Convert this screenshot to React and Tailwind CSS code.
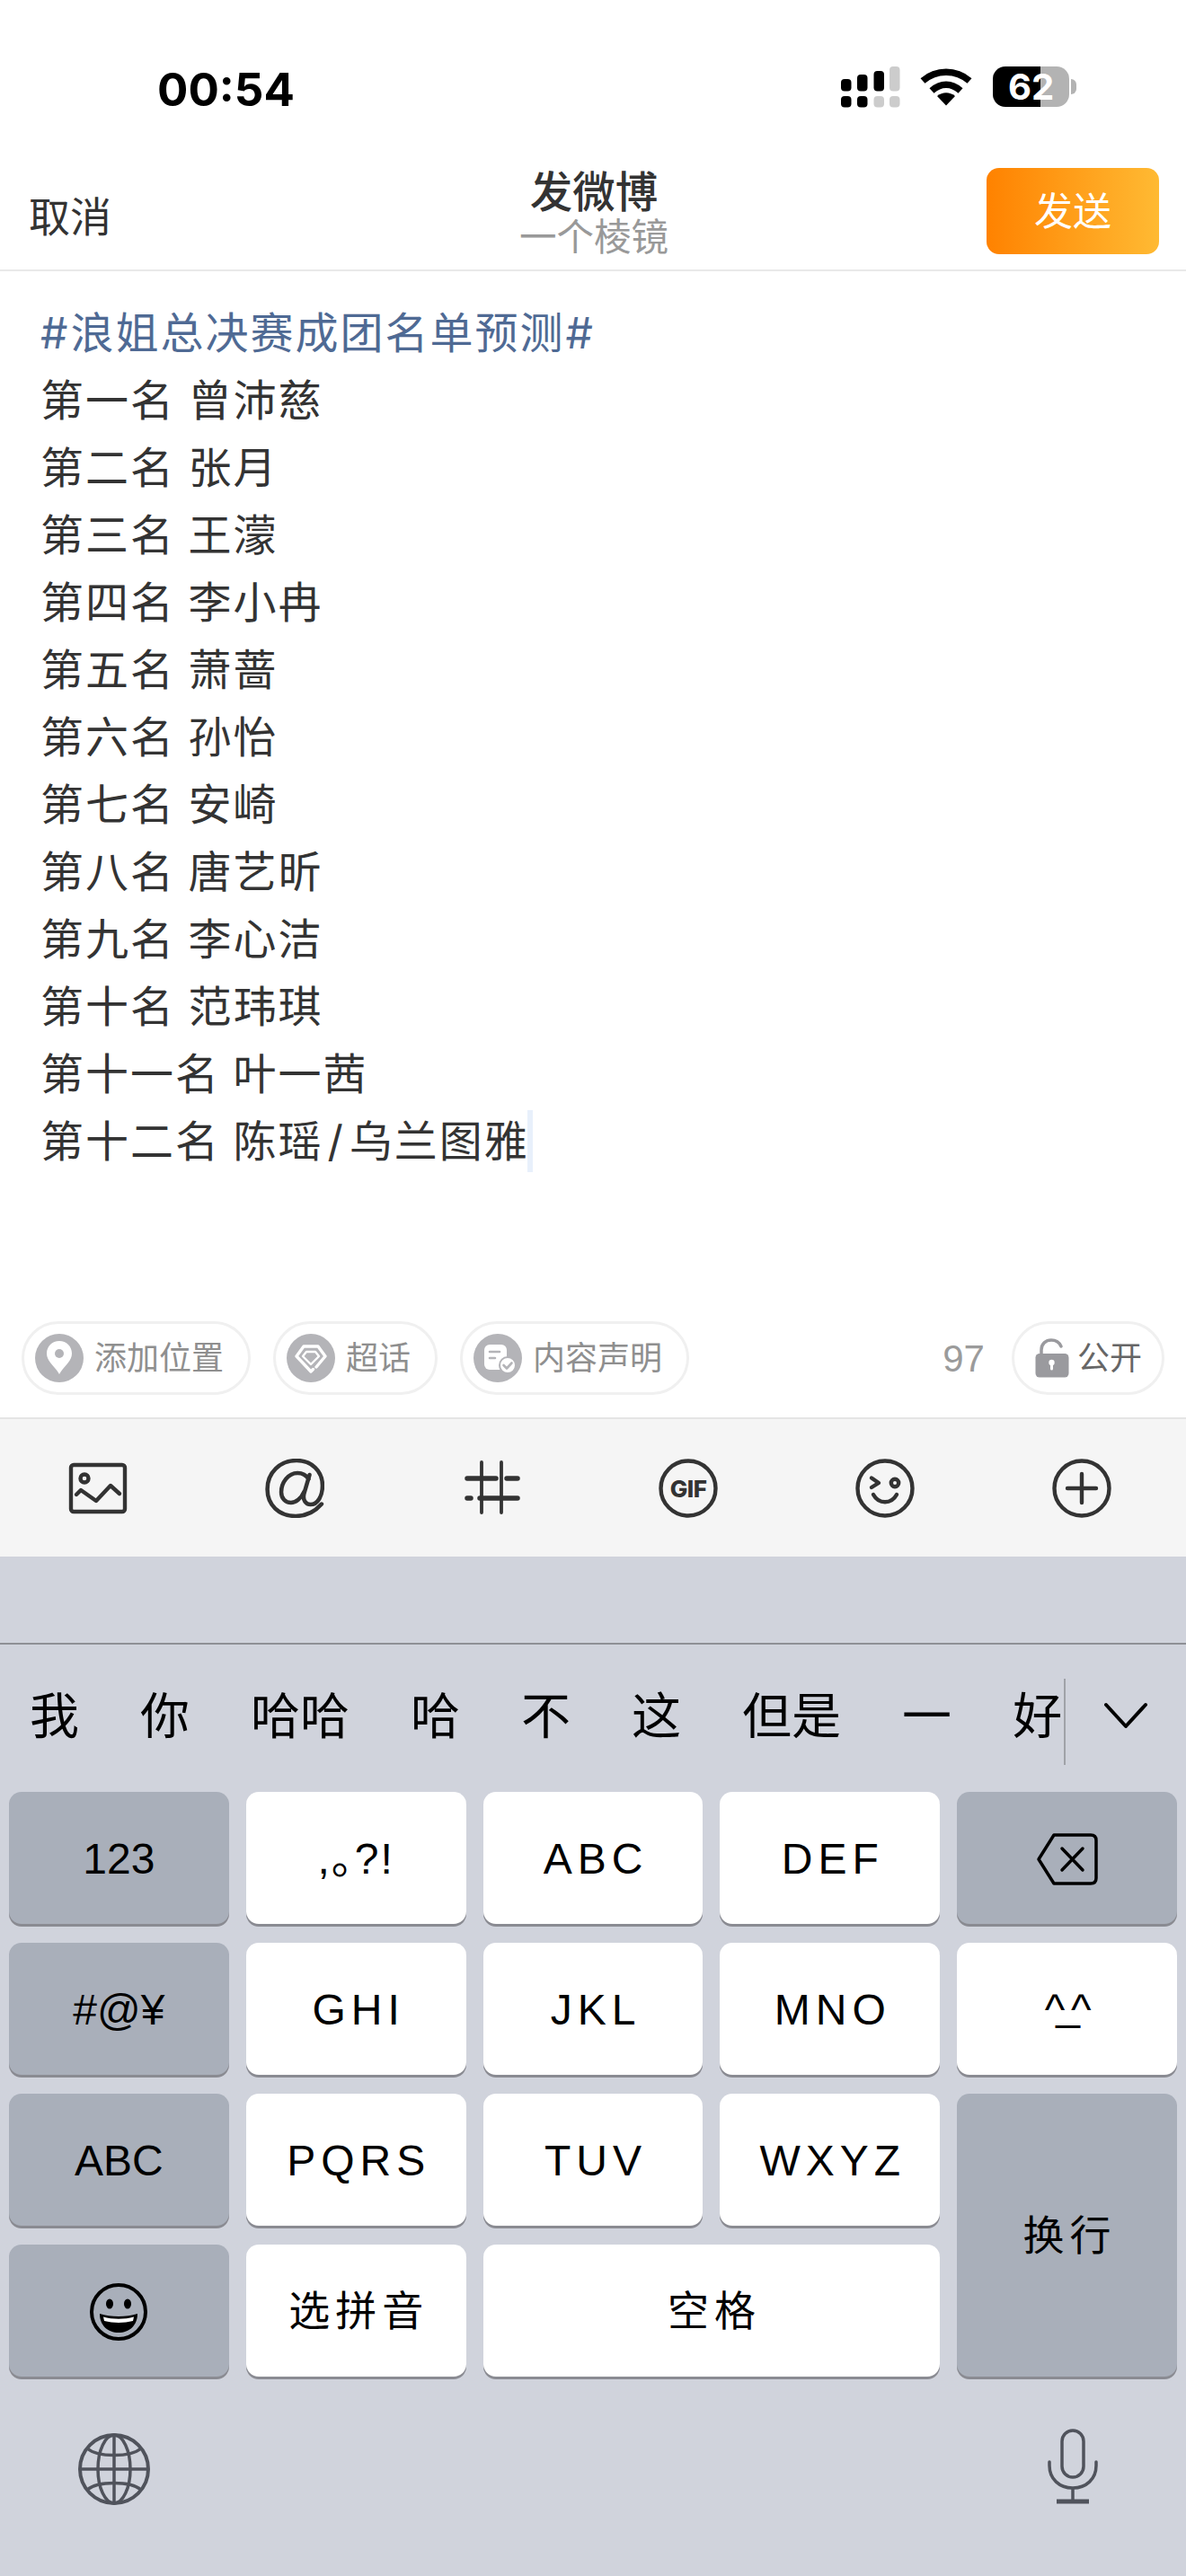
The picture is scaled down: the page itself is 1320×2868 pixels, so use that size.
import React from "react";

const lines = [
  "第一名 曾沛慈",
  "第二名 张月",
  "第三名 王濛",
  "第四名 李小冉",
  "第五名 萧蔷",
  "第六名 孙怡",
  "第七名 安崎",
  "第八名 唐艺昕",
  "第九名 李心洁",
  "第十名 范玮琪",
  "第十一名 叶一茜",
];

function Signal() {
  const g = "#cccccc";
  return (
    <svg width="66" height="46" viewBox="0 0 66 46">
      <rect x="0" y="14" width="11.5" height="13.5" rx="4" fill="#000" />
      <rect x="18" y="9" width="11.5" height="18.5" rx="4" fill="#000" />
      <rect x="36.5" y="5" width="11.5" height="22.5" rx="4" fill="#000" />
      <rect x="54" y="0" width="11.5" height="27.5" rx="4" fill={g} />
      <rect x="0" y="33" width="11.5" height="12.5" rx="4" fill="#000" />
      <rect x="18" y="33" width="11.5" height="12.5" rx="4" fill="#000" />
      <rect x="36.5" y="33" width="11.5" height="12.5" rx="4" fill={g} />
      <rect x="54" y="33" width="11.5" height="12.5" rx="4" fill={g} />
    </svg>
  );
}

function Wifi() {
  return (
    <svg width="58" height="42" viewBox="0 0 58 42" fill="none" stroke="#000" strokeWidth="7.5">
      <path d="M3 14 C18 1 40 1 55 14" />
      <path d="M13 25 C23 16 35 16 45 25" />
      <path d="M29 41.5 L19 31 C25 26 33 26 39 31 Z" fill="#000" stroke="none" />
    </svg>
  );
}

function PinIcon() {
  return (
    <svg width="54" height="54" viewBox="0 0 54 54" className="shrink-0">
      <circle cx="27" cy="27" r="27" fill="#b4b4b8" />
      <path d="M27 8 C35 8 41 14 41 22 C41 31 31 37 27 45 C23 37 13 31 13 22 C13 14 19 8 27 8 Z" fill="#fff" />
      <circle cx="27" cy="22" r="5" fill="#b4b4b8" />
    </svg>
  );
}

function GemIcon() {
  return (
    <svg width="54" height="54" viewBox="0 0 54 54" className="shrink-0" fill="none">
      <circle cx="27" cy="27" r="27" fill="#b4b4b8" />
      <path d="M33 37 L43 25 L35 14 H19 L11 25 L27 42 L29.500 39.500" stroke="#fff" strokeWidth="3.400" strokeLinejoin="round" strokeLinecap="round" />
      <path d="M22 20 H32 L36 25 L27 34 L18 25 Z" stroke="#fff" strokeWidth="2.400" strokeLinejoin="round" />
    </svg>
  );
}

function DocIcon() {
  return (
    <svg width="54" height="54" viewBox="0 0 54 54" className="shrink-0" fill="none">
      <circle cx="27" cy="27" r="27" fill="#b4b4b8" />
      <rect x="12" y="12" width="25" height="28" rx="6" fill="#fff" />
      <path d="M18 20 H29 M18 27 H24" stroke="#b4b4b8" strokeWidth="2.600" strokeLinecap="round" />
      <circle cx="38" cy="35" r="9" fill="#fff" stroke="#b4b4b8" strokeWidth="2" />
      <path d="M33.500 35 L37 38.500 L42.500 32.500" stroke="#b4b4b8" strokeWidth="2.600" strokeLinecap="round" strokeLinejoin="round" />
    </svg>
  );
}

function LockIcon() {
  return (
    <svg width="38" height="44" viewBox="0 0 38 44" className="shrink-0" fill="none">
      <path d="M7 17 V13 C7 6 12 2 18 2 C23 2 27 4.500 29 9" stroke="#9a9a9e" strokeWidth="3.500" strokeLinecap="round" />
      <rect x="0.500" y="17" width="37" height="26.500" rx="4.500" fill="#9a9a9e" />
      <circle cx="18.500" cy="27" r="3.200" fill="#fff" />
      <path d="M18.500 27 V34" stroke="#fff" strokeWidth="3" strokeLinecap="round" />
    </svg>
  );
}

function Pill({ icon, children, className }) {
  return (
    <div className={"flex h-[82px] items-center gap-[12px] rounded-full border-[3px] border-[#f0f0f0] " + className}>
      {icon}
      <span className="pt-[2px]">{children}</span>
    </div>
  );
}

const tool = { fill: "none", stroke: "#333", strokeWidth: 4.4, strokeLinecap: "round", strokeLinejoin: "round" };

function ImageTool() {
  return (
    <svg width="66" height="66" viewBox="0 0 66 66" {...tool}>
      <rect x="3" y="7" width="60" height="52" rx="3" />
      <circle cx="18" cy="22" r="4.500" />
      <path d="M9 40 L14 35 L31 47 L47 30 L57 39" />
    </svg>
  );
}

function AtTool() {
  return (
    <svg width="66" height="66" viewBox="0 0 64 64" {...tool}>
      <path d="M48 17.500 L42 38 C40.500 45 44 49.500 49 49.500 C57 49.500 62 40 62 29 C62 13 50 2 34 2 C16 2 2.500 15 2.500 33 C2.500 50 15 62 33 62 C45 62 54 57 61 49" />
      <path d="M47 22 C44 17 40 15.500 35 15.500 C25 15.500 17.500 26 17.500 36 C17.500 43 22 47.500 28 47.500 C33 47.500 39 43 42 36" />
    </svg>
  );
}

function HashTool() {
  return (
    <svg width="66" height="66" viewBox="0 0 66 66" fill="none" stroke="#333" strokeLinecap="round">
      <path d="M22 4 V60 M44 4 V60" strokeWidth="3.800" />
      <path d="M6 22 H38 M50 22 H62 M6 44 H10 M20 44 H62" strokeWidth="5.500" />
    </svg>
  );
}

function GifTool() {
  return (
    <svg width="66" height="66" viewBox="0 0 66 66">
      <circle cx="33" cy="33" r="30.500" fill="none" stroke="#333" strokeWidth="4.400" />
      <text x="33" y="43" textAnchor="middle" fontFamily="Inter" fontWeight="800" fontSize="26" fill="#333" letterSpacing="-0.500">GIF</text>
    </svg>
  );
}

function SmileTool() {
  return (
    <svg width="66" height="66" viewBox="0 0 66 66" {...tool}>
      <circle cx="33" cy="33" r="30.500" />
      <path d="M18 21.500 L26 27 L18 32" />
      <circle cx="44" cy="27" r="4.200" />
      <path d="M20 40 C26 51 40 51 46 40" />
    </svg>
  );
}

function PlusTool() {
  return (
    <svg width="66" height="66" viewBox="0 0 66 66" {...tool}>
      <circle cx="33" cy="33" r="30.500" />
      <path d="M17 33 H49 M33 17 V49" />
    </svg>
  );
}

function Key({ dark, children, className = "" }) {
  return (
    <div
      className={
        "flex items-center justify-center rounded-[14px] pt-[2px] text-[48px] text-black shadow-[0_3px_0_#8a8b92] " +
        (dark ? "bg-[#a9afba] " : "bg-white ") +
        className
      }
    >
      {children}
    </div>
  );
}

function Backspace() {
  return (
    <svg width="70" height="60" viewBox="0 0 70 60" fill="none" stroke="#000" strokeWidth="3.500" strokeLinejoin="round" strokeLinecap="round">
      <path d="M20 3 H61 C65 3 67 5 67 9 V51 C67 55 65 57 61 57 H20 L3 30 Z" />
      <path d="M29 18 L52 42 M52 18 L29 42" />
    </svg>
  );
}

function Grin() {
  return (
    <svg width="66" height="66" viewBox="0 0 66 66" fill="none">
      <circle cx="33" cy="33" r="30" stroke="#000" strokeWidth="4" />
      <ellipse cx="23" cy="24" rx="4" ry="5.500" fill="#000" />
      <ellipse cx="43" cy="24" rx="4" ry="5.500" fill="#000" />
      <path d="M12 35 C24 39 42 39 54 35 C54 48 45 56 33 56 C21 56 12 48 12 35 Z" fill="#000" />
      <path d="M16 38.500 C26 41.500 40 41.500 50 38.500 L49 43 C39 45.500 27 45.500 17 43 Z" fill="#fff" />
    </svg>
  );
}

function Globe() {
  return (
    <svg width="80" height="80" viewBox="0 0 80 80" fill="none" stroke="#50535c" strokeWidth="3.500">
      <circle cx="40" cy="40" r="38" strokeWidth="4" />
      <ellipse cx="40" cy="40" rx="18" ry="38" />
      <path d="M40 2 V78 M2 40 H78" />
      <path d="M10 17 C22 27 58 27 70 17 M10 63 C22 53 58 53 70 63" />
    </svg>
  );
}

function Mic() {
  return (
    <svg width="56" height="84" viewBox="0 0 56 84" fill="none" stroke="#50535c" strokeWidth="3.500">
      <rect x="16" y="2" width="24" height="52" rx="12" />
      <path d="M2 37 V41 C2 56 13 66 28 66 C43 66 54 56 54 41 V37" strokeLinecap="round" />
      <path d="M28 66 V80" />
      <path d="M10 81 H46" strokeWidth="5" />
    </svg>
  );
}

export default function App() {
  return (
    <div className="flex h-[2868px] w-[1320px] flex-col overflow-hidden bg-white font-['Liberation_Sans','Noto_Sans_CJK_SC',sans-serif]">
      {/* status bar */}
      <div className="flex h-[187px] shrink-0 items-start justify-between pl-[175px] pr-[122px] pt-[74px]">
        <div className="pt-[3px] font-['Inter'] text-[51px] font-bold leading-[46px] text-black">00:54</div>
        <div className="flex items-start">
          <Signal />
          <div className="ml-[22px] mt-[2px]">
            <Wifi />
          </div>
          <div className="ml-[23px] flex h-[45px] w-[85px] items-center justify-center rounded-[14px] bg-[linear-gradient(90deg,#000_62.4%,#b3b3b3_62.4%)] font-['Inter'] text-[40px] font-bold leading-none text-white">
            62
          </div>
          <div className="ml-[2px] mt-[14px] h-[17px] w-[6px] rounded-r-full bg-[#b3b3b3]" />
        </div>
      </div>

      {/* nav */}
      <div className="grid h-[115px] shrink-0 grid-cols-[1fr_auto_1fr] border-b-2 border-[#e9e9e9] pl-[32px] pr-[30px]">
        <div className="pt-[30px] text-[46px] leading-[50px] text-[#333]">取消</div>
        <div className="flex flex-col items-center pt-[2px]">
          <div className="text-[47.500px] font-medium leading-[52px] text-[#333]">发微博</div>
          <div className="text-[41.500px] leading-[48px] text-[#999]">一个棱镜</div>
        </div>
        <div className="flex justify-end">
          <div className="flex h-[96px] w-[192px] items-center justify-center rounded-[14px] bg-[linear-gradient(90deg,#ff8200,#ffba33)] pt-[3px] text-[43px] leading-none text-white">
            发送
          </div>
        </div>
      </div>

      {/* body */}
      <div className="flex-1 pl-[45px] pr-[46px] pt-[31px] font-['Inter','Noto_Sans_CJK_SC',sans-serif] text-[48px] leading-[75px] tracking-[2px] text-[#333] [word-spacing:-1px]">
        <div className="text-[#4f6a94]">
          <span className="pr-[1px]">#</span>浪姐总决赛成团名单预测<span className="pl-[1px]">#</span>
        </div>
        {lines.map((l) => (
          <div key={l}>{l}</div>
        ))}
        <div className="flex items-center">
          <span>
            第十二名 陈瑶<span className="px-[5px]">/</span>乌兰图雅
          </span>
          <span className="-ml-[2px] h-[69px] w-[6px] bg-[#e8f0fb]" />
        </div>
      </div>

      {/* pills */}
      <div className="flex shrink-0 items-center px-[24px] pb-[25px]">
        <Pill icon={<PinIcon />} className="pl-[12px] pr-[27px]">
          <span className="text-[36px] leading-none text-[#8f8f8f]">添加位置</span>
        </Pill>
        <Pill icon={<GemIcon />} className="ml-[25px] pl-[12px] pr-[27px]">
          <span className="text-[36px] leading-none text-[#8f8f8f]">超话</span>
        </Pill>
        <Pill icon={<DocIcon />} className="ml-[25px] pl-[12px] pr-[27px]">
          <span className="text-[36px] leading-none text-[#8f8f8f]">内容声明</span>
        </Pill>
        <div className="ml-auto mr-[30px] pt-[2px] text-[42px] font-light leading-none text-[#9b9b9b]">97</div>
        <Pill icon={<LockIcon />} className="!gap-[9px] pl-[23px] pr-[22px]">
          <span className="text-[36px] leading-none text-[#666]">公开</span>
        </Pill>
      </div>

      {/* toolbar */}
      <div className="flex h-[155px] shrink-0 items-center justify-between border-t-2 border-[#e5e5e5] bg-[#f5f5f5] pl-[76px] pr-[83px]">
        <ImageTool />
        <AtTool />
        <HashTool />
        <GifTool />
        <SmileTool />
        <PlusTool />
      </div>

      {/* keyboard */}
      <div className="flex h-[1135px] shrink-0 flex-col bg-[#d0d3dc]">
        <div className="h-[98px] shrink-0 border-b-2 border-[#8e9095]" />
        <div className="flex h-[164px] shrink-0 items-center whitespace-nowrap text-[55px] leading-none text-black">
          <div className="flex w-[1184px] shrink-0 gap-x-[68px] pl-[33px] pb-[4px]">
            <span className="shrink-0">我</span>
            <span className="shrink-0">你</span>
            <span className="shrink-0">哈哈</span>
            <span className="shrink-0">哈</span>
            <span className="shrink-0">不</span>
            <span className="shrink-0">这</span>
            <span className="shrink-0">但是</span>
            <span className="shrink-0">一</span>
            <span className="shrink-0">好</span>
          </div>
          <div className="mt-[8px] h-[96px] w-[2px] shrink-0 bg-[#a0a2a8]" />
          <div className="flex flex-1 justify-center pb-[6px]">
            <svg width="50" height="30" viewBox="0 0 50 30" fill="none" stroke="#000" strokeWidth="4" strokeLinecap="round" strokeLinejoin="round">
              <path d="M3 3 L25 27 L47 3" />
            </svg>
          </div>
        </div>
        <div className="grid grid-cols-5 grid-rows-[repeat(4,147px)] gap-x-[19px] gap-y-[21px] px-[10px]">
          <Key dark>123</Key>
          <Key className="tracking-[2px] [font-feature-settings:'halt']">,。?!</Key>
          <Key className="pl-[6px] tracking-[6px]">ABC</Key>
          <Key className="pl-[6px] tracking-[6px]">DEF</Key>
          <Key dark><Backspace /></Key>

          <Key dark>#@¥</Key>
          <Key className="pl-[6px] tracking-[6px]">GHI</Key>
          <Key className="pl-[6px] tracking-[6px]">JKL</Key>
          <Key className="pl-[6px] tracking-[6px]">MNO</Key>
          <Key className="pr-[8px] tracking-[-10px]">
            <span>^</span>
            <span className="inline-block -translate-y-[6px]">_</span>
            <span>^</span>
          </Key>

          <Key dark>ABC</Key>
          <Key className="pl-[6px] tracking-[6px]">PQRS</Key>
          <Key className="pl-[6px] tracking-[6px]">TUV</Key>
          <Key className="pl-[6px] tracking-[6px]">WXYZ</Key>
          <Key dark className="row-span-2 pl-[6px] !text-[46px] tracking-[6px]">换行</Key>

          <Key dark><Grin /></Key>
          <Key className="pl-[6px] !text-[46px] tracking-[6px]">选拼音</Key>
          <Key className="col-span-2 pl-[6px] !text-[46px] tracking-[6px]">空格</Key>
        </div>
        <div className="mt-[58px] flex items-start justify-between pl-[87px] pr-[98px]">
          <div className="mt-[5px]"><Globe /></div>
          <Mic />
        </div>
      </div>
    </div>
  );
}
